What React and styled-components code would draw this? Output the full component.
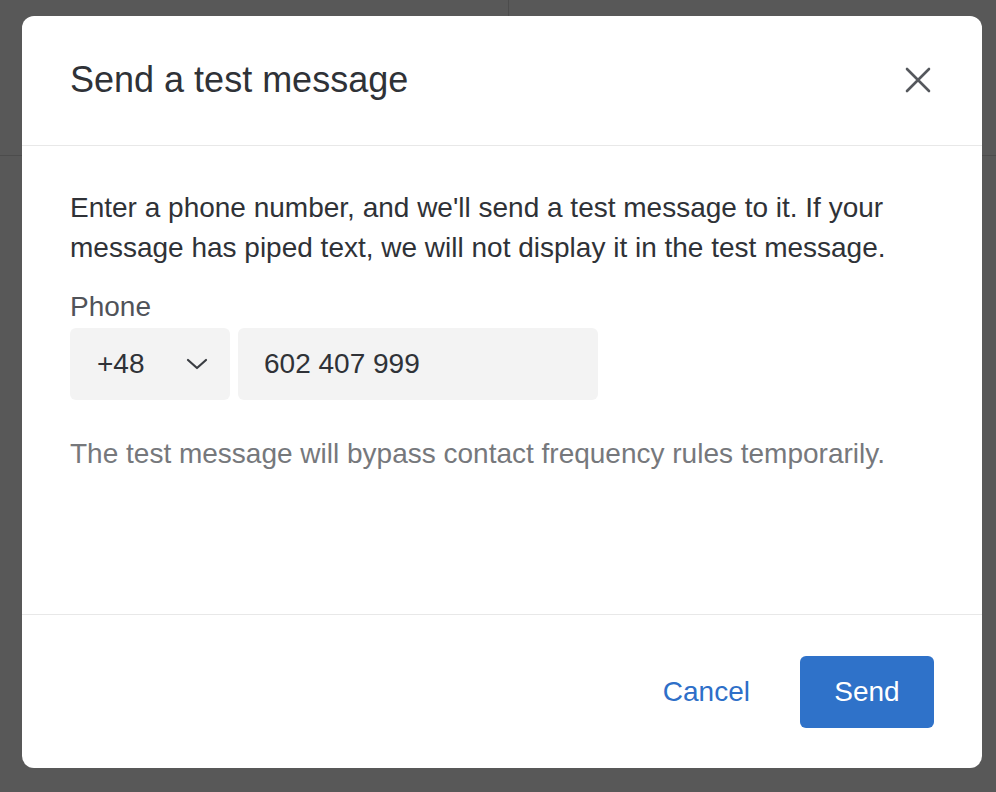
import React from "react";
import styled, { createGlobalStyle } from "styled-components";

const Global = createGlobalStyle`
  html, body { margin: 0; padding: 0; }
  body {
    background: #585858;
    font-family: "Liberation Sans", Arial, Helvetica, sans-serif;
    -webkit-font-smoothing: antialiased;
  }
  * { box-sizing: border-box; }
`;

const Page = styled.div`
  position: relative;
  width: 996px;
  height: 792px;
  overflow: hidden;
  display: grid;
  grid-template-columns: 509px 1fr;
  grid-template-rows: 156px 1fr;
`;

const PageCell = styled.div`
  grid-column: ${(p) => (p.$span ? "1 / -1" : "auto")};
  border-right: ${(p) => (p.$divider ? "1px solid #4c4c4c" : "none")};
  border-bottom: ${(p) => (p.$bottom ? "1px solid #4c4c4c" : "none")};
`;

const Modal = styled.div`
  position: absolute;
  left: 22px;
  top: 16px;
  width: 960px;
  height: 752px;
  background: #ffffff;
  border-radius: 12px;
  display: flex;
  flex-direction: column;
  overflow: hidden;
`;

const Header = styled.div`
  height: 130px;
  flex: none;
  display: flex;
  align-items: center;
  justify-content: space-between;
  padding: 0 50px 2px 48px;
  border-bottom: 1px solid #e8e8e8;
`;

const Title = styled.h2`
  margin: 0;
  font-size: 36px;
  font-weight: 400;
  color: #2f3237;
`;

const CloseButton = styled.button`
  border: none;
  background: none;
  padding: 0;
  width: 28px;
  height: 28px;
  display: flex;
  align-items: center;
  justify-content: center;
  cursor: pointer;
`;

const Body = styled.div`
  flex: 1;
  padding: 42px 48px 0;
  border-bottom: 1px solid #e8e8e8;
`;

const Intro = styled.p`
  margin: 0;
  font-size: 28px;
  line-height: 40px;
  color: #2f3237;
`;

const Label = styled.div`
  margin-top: 21px;
  font-size: 28px;
  line-height: 36px;
  color: #505359;
`;

const PhoneRow = styled.div`
  margin-top: 3px;
  display: flex;
  gap: 8px;
`;

const Field = styled.div`
  height: 72px;
  width: ${(p) => p.$width}px;
  background: #f3f3f3;
  border-radius: 6px;
  display: flex;
  align-items: center;
  justify-content: space-between;
  padding: 0 22px 0 ${(p) => p.$pad}px;
  font-size: 28px;
  color: #2f3237;
`;

const Hint = styled.p`
  margin: 38px 0 0;
  font-size: 28px;
  line-height: 32px;
  color: #76787c;
`;

const Footer = styled.div`
  height: 153px;
  flex: none;
  display: flex;
  align-items: center;
  justify-content: flex-end;
  padding: 0 48px 0 0;
  gap: 50px;
`;

const TextButton = styled.button`
  border: none;
  background: none;
  padding: 0;
  font-family: inherit;
  font-size: 28px;
  color: #2e6fc8;
  cursor: pointer;
`;

const PrimaryButton = styled.button`
  border: none;
  width: 134px;
  height: 72px;
  border-radius: 6px;
  background: #2f72c9;
  color: #ffffff;
  font-family: inherit;
  font-size: 28px;
  cursor: pointer;
`;

export default function App() {
  return (
    <>
      <Global />
      <Page>
        <PageCell $divider $bottom />
        <PageCell $bottom />
        <PageCell $span />
        <Modal>
          <Header>
            <Title>Send a test message</Title>
            <CloseButton aria-label="Close">
              <svg width="26" height="26" viewBox="0 0 26 26">
                <path d="M2 2L24 24M24 2L2 24" stroke="#55585d" strokeWidth="2.6" strokeLinecap="round" />
              </svg>
            </CloseButton>
          </Header>
          <Body>
            <Intro>
              Enter a phone number, and we'll send a test message to it. If your
              <br />
              message has piped text, we will not display it in the test message.
            </Intro>
            <Label>Phone</Label>
            <PhoneRow>
              <Field $width={160} $pad={27}>
                <span>+48</span>
                <svg width="22" height="12" viewBox="0 0 22 12">
                  <path d="M2 2L11 10L20 2" fill="none" stroke="#3a3d42" strokeWidth="2.2" strokeLinecap="round" strokeLinejoin="round" />
                </svg>
              </Field>
              <Field $width={360} $pad={26}>
                <span>602 407 999</span>
              </Field>
            </PhoneRow>
            <Hint>The test message will bypass contact frequency rules temporarily.</Hint>
          </Body>
          <Footer>
            <TextButton>Cancel</TextButton>
            <PrimaryButton>Send</PrimaryButton>
          </Footer>
        </Modal>
      </Page>
    </>
  );
}
